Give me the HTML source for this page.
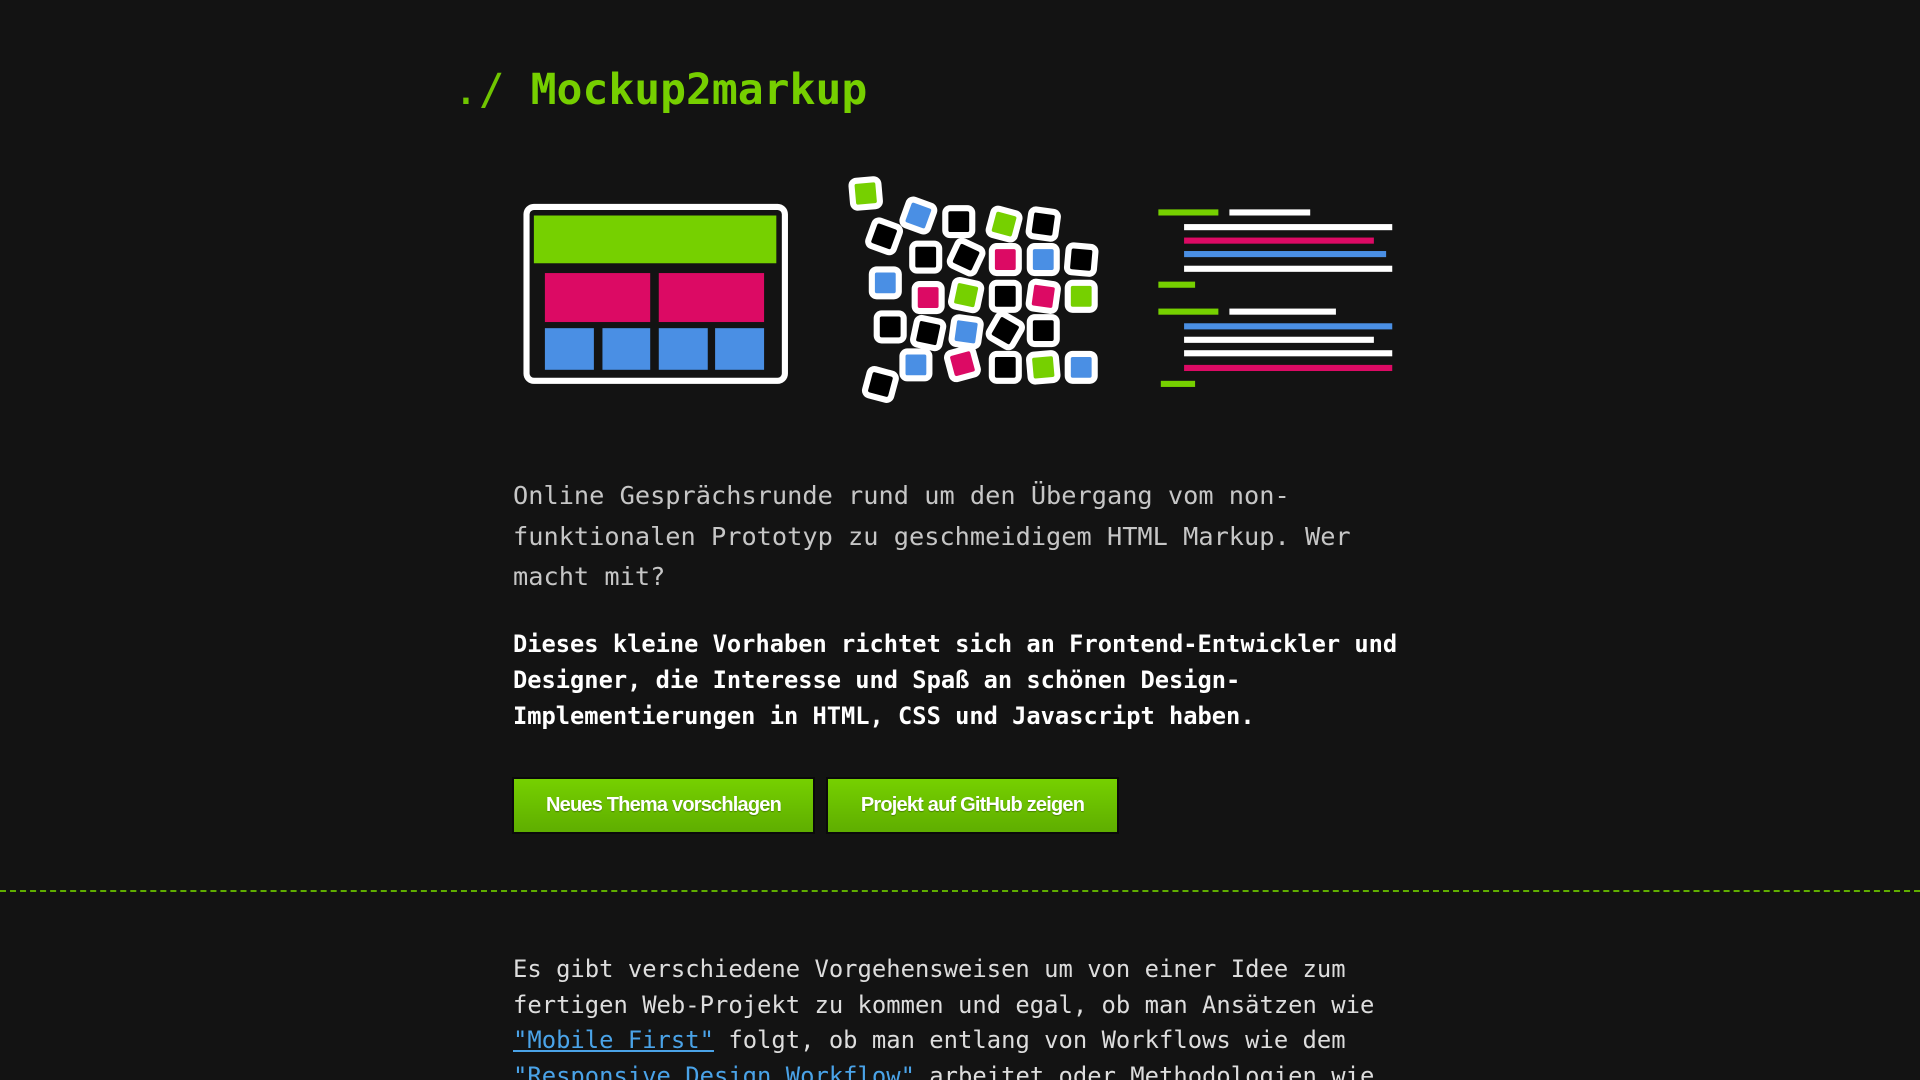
<!DOCTYPE html>
<html><head><meta charset="utf-8"><style>
html,body{margin:0;padding:0;background:#131313;width:1920px;height:1080px;overflow:hidden;position:relative}
.m{font-family:"DejaVu Sans Mono","Liberation Mono",monospace;white-space:nowrap;position:absolute}
#t{left:453px;top:58px;font-size:43px;color:#76cf00;line-height:64px;font-weight:bold}
#t .d{font-weight:normal;opacity:.95}
#p1{left:513px;top:476px;font-size:25.3px;line-height:40.5px;color:#c6c6c6}
#p2{left:513px;top:626px;font-size:23.7px;line-height:36px;color:#fff;font-weight:bold}
#p3{left:513px;top:952px;font-size:23.85px;line-height:35.5px;color:#ddd}
#p3 a{color:#4aa3e8;text-decoration:underline}
.b{position:absolute;top:779px;height:53px;background:linear-gradient(#76d000,#5fae00);box-shadow:0 0 0 2px #0a0a0a;color:#fff;font-family:"Liberation Sans",sans-serif;font-weight:bold;font-size:20px;letter-spacing:-0.8px;line-height:53px;text-align:center;text-shadow:0 1px 1px rgba(0,0,0,.3)}
#hr{position:absolute;left:0;top:890px;width:1920px;border-top:2px dashed #5fae00}
</style></head><body>
<div class="m" id="t"><span class="d">./</span> Mockup2markup</div>
<svg style="position:absolute;left:0;top:0" width="1920" height="1080" viewBox="0 0 1568 882">
<rect x="430" y="169" width="211" height="142" rx="6" fill="none" stroke="#fff" stroke-width="5"/>
<rect x="436" y="176" width="198" height="39" fill="#76d000"/>
<rect x="445" y="223" width="86" height="40" fill="#dc0a64"/>
<rect x="538" y="223" width="86" height="40" fill="#dc0a64"/>
<rect x="445" y="268" width="40" height="34" fill="#4a8fe4"/>
<rect x="492" y="268" width="39" height="34" fill="#4a8fe4"/>
<rect x="538" y="268" width="40" height="34" fill="#4a8fe4"/>
<rect x="584" y="268" width="40" height="34" fill="#4a8fe4"/>
<g stroke="#fff" stroke-width="5">
<g transform="translate(707,158) rotate(-5)"><rect x="-11" y="-11" width="22" height="22" rx="4" fill="#76d000"/></g>
<g transform="translate(750,176) rotate(20)"><rect x="-11" y="-11" width="22" height="22" rx="4" fill="#4a8fe4"/></g>
<g transform="translate(722,193) rotate(20)"><rect x="-11" y="-11" width="22" height="22" rx="4" fill="#000"/></g>
<g transform="translate(783,181) rotate(0)"><rect x="-11" y="-11" width="22" height="22" rx="4" fill="#000"/></g>
<g transform="translate(820,183) rotate(15)"><rect x="-11" y="-11" width="22" height="22" rx="4" fill="#76d000"/></g>
<g transform="translate(852,183) rotate(8)"><rect x="-11" y="-11" width="22" height="22" rx="4" fill="#000"/></g>
<g transform="translate(756,210) rotate(0)"><rect x="-11" y="-11" width="22" height="22" rx="4" fill="#000"/></g>
<g transform="translate(789,210) rotate(25)"><rect x="-11" y="-11" width="22" height="22" rx="4" fill="#000"/></g>
<g transform="translate(821,212) rotate(0)"><rect x="-11" y="-11" width="22" height="22" rx="4" fill="#dc0a64"/></g>
<g transform="translate(852,212) rotate(0)"><rect x="-11" y="-11" width="22" height="22" rx="4" fill="#4a8fe4"/></g>
<g transform="translate(883,212) rotate(5)"><rect x="-11" y="-11" width="22" height="22" rx="4" fill="#000"/></g>
<g transform="translate(723,231) rotate(0)"><rect x="-11" y="-11" width="22" height="22" rx="4" fill="#4a8fe4"/></g>
<g transform="translate(758,243) rotate(0)"><rect x="-11" y="-11" width="22" height="22" rx="4" fill="#dc0a64"/></g>
<g transform="translate(789,241) rotate(12)"><rect x="-11" y="-11" width="22" height="22" rx="4" fill="#76d000"/></g>
<g transform="translate(821,242) rotate(0)"><rect x="-11" y="-11" width="22" height="22" rx="4" fill="#000"/></g>
<g transform="translate(852,242) rotate(8)"><rect x="-11" y="-11" width="22" height="22" rx="4" fill="#dc0a64"/></g>
<g transform="translate(883,242) rotate(0)"><rect x="-11" y="-11" width="22" height="22" rx="4" fill="#76d000"/></g>
<g transform="translate(727,267) rotate(0)"><rect x="-11" y="-11" width="22" height="22" rx="4" fill="#000"/></g>
<g transform="translate(758,272) rotate(12)"><rect x="-11" y="-11" width="22" height="22" rx="4" fill="#000"/></g>
<g transform="translate(789,271) rotate(8)"><rect x="-11" y="-11" width="22" height="22" rx="4" fill="#4a8fe4"/></g>
<g transform="translate(821,270) rotate(30)"><rect x="-11" y="-11" width="22" height="22" rx="4" fill="#000"/></g>
<g transform="translate(852,270) rotate(0)"><rect x="-11" y="-11" width="22" height="22" rx="4" fill="#000"/></g>
<g transform="translate(748,298) rotate(0)"><rect x="-11" y="-11" width="22" height="22" rx="4" fill="#4a8fe4"/></g>
<g transform="translate(786,297) rotate(-15)"><rect x="-11" y="-11" width="22" height="22" rx="4" fill="#dc0a64"/></g>
<g transform="translate(821,300) rotate(0)"><rect x="-11" y="-11" width="22" height="22" rx="4" fill="#000"/></g>
<g transform="translate(852,300) rotate(-5)"><rect x="-11" y="-11" width="22" height="22" rx="4" fill="#76d000"/></g>
<g transform="translate(883,300) rotate(0)"><rect x="-11" y="-11" width="22" height="22" rx="4" fill="#4a8fe4"/></g>
<g transform="translate(719,314) rotate(15)"><rect x="-11" y="-11" width="22" height="22" rx="4" fill="#000"/></g>
</g>
<g>
<rect x="946" y="171" width="49" height="5" fill="#76d000"/><rect x="1004" y="171" width="66" height="5" fill="#fff"/>
<rect x="967" y="183" width="170" height="5" fill="#fff"/>
<rect x="967" y="194" width="155" height="5" fill="#dc0a64"/>
<rect x="967" y="205" width="165" height="5" fill="#4a8fe4"/>
<rect x="967" y="217" width="170" height="5" fill="#fff"/>
<rect x="946" y="230" width="30" height="5" fill="#76d000"/>
<rect x="946" y="252" width="49" height="5" fill="#76d000"/><rect x="1004" y="252" width="87" height="5" fill="#fff"/>
<rect x="967" y="264" width="170" height="5" fill="#4a8fe4"/>
<rect x="967" y="275" width="155" height="5" fill="#fff"/>
<rect x="967" y="286" width="170" height="5" fill="#fff"/>
<rect x="967" y="298" width="170" height="5" fill="#dc0a64"/>
<rect x="948" y="311" width="28" height="5" fill="#76d000"/>
</g>
</svg>
<div class="m" id="p1">Online Gesprächsrunde rund um den Übergang vom non-<br>funktionalen Prototyp zu geschmeidigem HTML Markup. Wer<br>macht mit?</div>
<div class="m" id="p2">Dieses kleine Vorhaben richtet sich an Frontend-Entwickler und<br>Designer, die Interesse und Spaß an schönen Design-<br>Implementierungen in HTML, CSS und Javascript haben.</div>
<div class="b" style="left:514px;width:299px">Neues Thema vorschlagen</div>
<div class="b" style="left:828px;width:289px">Projekt auf GitHub zeigen</div>
<div id="hr"></div>
<div class="m" id="p3">Es gibt verschiedene Vorgehensweisen um von einer Idee zum<br>fertigen Web-Projekt zu kommen und egal, ob man Ansätzen wie<br><a>"Mobile First"</a> folgt, ob man entlang von Workflows wie dem<br><a>"Responsive Design Workflow"</a> arbeitet oder Methodologien wie</div>
</body></html>
